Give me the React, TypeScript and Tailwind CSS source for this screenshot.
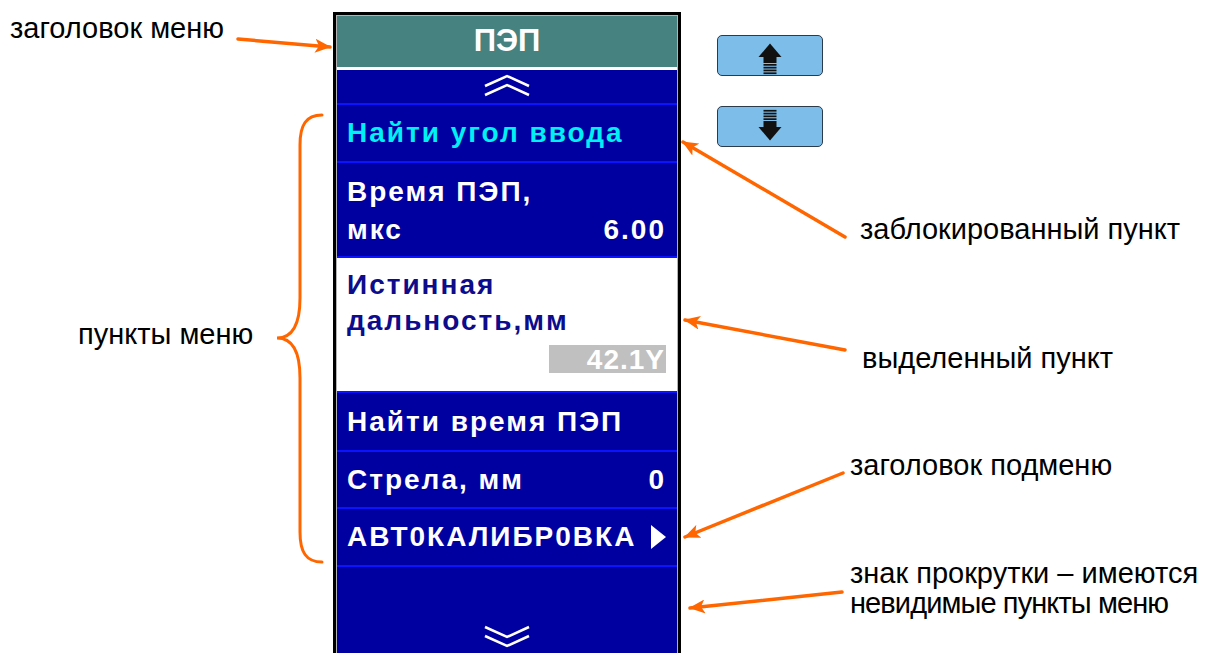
import React from "react";

const ORANGE = "#ff6600";

const Chevrons = ({ down }: { down?: boolean }) => (
  <svg width="46" height="24" viewBox="0 0 46 24" className={down ? "rotate-180" : ""}>
    <polyline points="1,12 23,2 45,12" fill="none" stroke="white" strokeWidth="2.5" />
    <polyline points="1,21 23,11 45,21" fill="none" stroke="white" strokeWidth="2.5" />
  </svg>
);

const ArrowBtn = ({ down }: { down?: boolean }) => (
  <div className="w-[106px] h-[41px] rounded-[5px] border border-[#2b3b4c] bg-[#7cbde9] flex justify-center">
    <svg width="30" height="41" viewBox="0 0 30 41" className={down ? "rotate-180" : ""}>
      <polygon points="15,7.5 3.5,21 26.5,21" fill="#111" />
      <rect x="8.5" y="20" width="13" height="7" fill="#111" />
      <rect x="8.5" y="28" width="13" height="1.7" fill="#111" />
      <rect x="8.5" y="30.8" width="13" height="1.7" fill="#111" />
      <rect x="8.5" y="33.6" width="13" height="1.7" fill="#111" />
      <rect x="8.5" y="36.4" width="13" height="1.7" fill="#111" />
    </svg>
  </div>
);

const Item = ({ children, className }: { children: React.ReactNode; className?: string }) => (
  <div className={"border-t-2 border-[#0a14ff] pl-[10px] pr-[11px] " + (className ?? "")}>{children}</div>
);

export default function App() {
  return (
    <div className="relative flex w-[1205px] h-[653px] overflow-hidden bg-white font-['Liberation_Sans',Arial,sans-serif] text-black">
      {/* left labels */}
      <div className="w-[333px] shrink-0 flex flex-col text-[29px] leading-[32px]">
        <p className="ml-[10px] mt-[12px]">заголовок меню</p>
        <p className="ml-[78px] mt-[274px]">пункты меню</p>
      </div>

      {/* menu panel */}
      <div className="mt-[12px] w-[348px] h-[648px] shrink-0 border-[3px] border-black">
        <div className="h-full border border-[#b4b4b4] bg-[#0000a0] flex flex-col font-bold text-white text-[28px] tracking-[2px]">
          <div className="h-[51px] bg-[#468280] flex items-center justify-center text-[31px] tracking-normal">ПЭП</div>
          <div className="h-[3px] bg-white" />
          <div className="h-[33px] flex justify-center pt-[4px]">
            <Chevrons />
          </div>
          <Item className="h-[58px] flex items-center text-[#00f0f4]">Найти угол ввода</Item>
          <Item className="h-[95px] pt-[10px] leading-[38px]">
            <div>Время ПЭП,</div>
            <div className="flex justify-between">
              <span>мкс</span>
              <span>6.00</span>
            </div>
          </Item>
          <Item className="h-[135px] bg-white pt-[9px] leading-[36px] text-[#0c0c8c] pr-[10px]">
            <div>Истинная</div>
            <div>дальность,мм</div>
            <div className="flex justify-end mt-[6px]">
              <span className="w-[117px] h-[28px] bg-[#c0c0c0] text-white text-right pr-[1px] leading-[29px] tracking-[1px]">42.1Y</span>
            </div>
          </Item>
          <Item className="h-[59px] flex items-center">Найти время ПЭП</Item>
          <Item className="h-[57px] flex items-center justify-between">
            <span>Стрела, мм</span>
            <span>0</span>
          </Item>
          <Item className="h-[58px] flex items-center justify-between pr-[10px]">
            <span>АВТ0КАЛИБР0ВКА</span>
            <svg width="15" height="24" viewBox="0 0 15 24">
              <polygon points="0,0 15,12 0,24" fill="white" />
            </svg>
          </Item>
          <div className="flex-1 border-t-2 border-[#0a14ff] flex justify-center items-end pb-[8px]">
            <Chevrons down />
          </div>
        </div>
      </div>

      {/* right side: keys and labels */}
      <div className="flex-1 flex flex-col text-[29px] leading-[30px]">
        <div className="ml-[36px] mt-[35px]">
          <ArrowBtn />
        </div>
        <div className="ml-[36px] mt-[30px]">
          <ArrowBtn down />
        </div>
        <p className="ml-[179px] mt-[67px]">заблокированный пункт</p>
        <p className="ml-[181px] mt-[99px]">выделенный пункт</p>
        <p className="ml-[169px] mt-[77px]">заголовок подменю</p>
        <p className="ml-[169px] mt-[78px]">знак прокрутки – имеются</p>
        <p className="ml-[169px] tracking-[-0.9px]">невидимые пункты меню</p>
      </div>

      {/* annotation arrows */}
      <svg className="absolute inset-0 pointer-events-none" width="1205" height="653" viewBox="0 0 1205 653">
        <defs>
          <marker id="ah" viewBox="0 0 16 14" refX="15" refY="7" markerWidth="16" markerHeight="14" markerUnits="userSpaceOnUse" orient="auto">
            <path d="M0,0 L16,7 L0,14 L4,7 z" fill={ORANGE} />
          </marker>
        </defs>
        <g stroke={ORANGE} strokeWidth="3.5" fill="none" strokeLinecap="round">
          <line x1="238" y1="39" x2="330" y2="47" markerEnd="url(#ah)" />
          <line x1="845" y1="237" x2="683" y2="142" markerEnd="url(#ah)" />
          <line x1="845" y1="350" x2="685" y2="320" markerEnd="url(#ah)" />
          <line x1="843" y1="473" x2="685" y2="537" markerEnd="url(#ah)" />
          <line x1="842" y1="592" x2="690" y2="608" markerEnd="url(#ah)" />
          <path d="M322,115 C306,115 300,125 300,145 L300,298 C300,325 292,338 277,338 C292,338 300,351 300,378 L300,532 C300,552 306,562 322,562" strokeWidth="3" />
        </g>
      </svg>
    </div>
  );
}
